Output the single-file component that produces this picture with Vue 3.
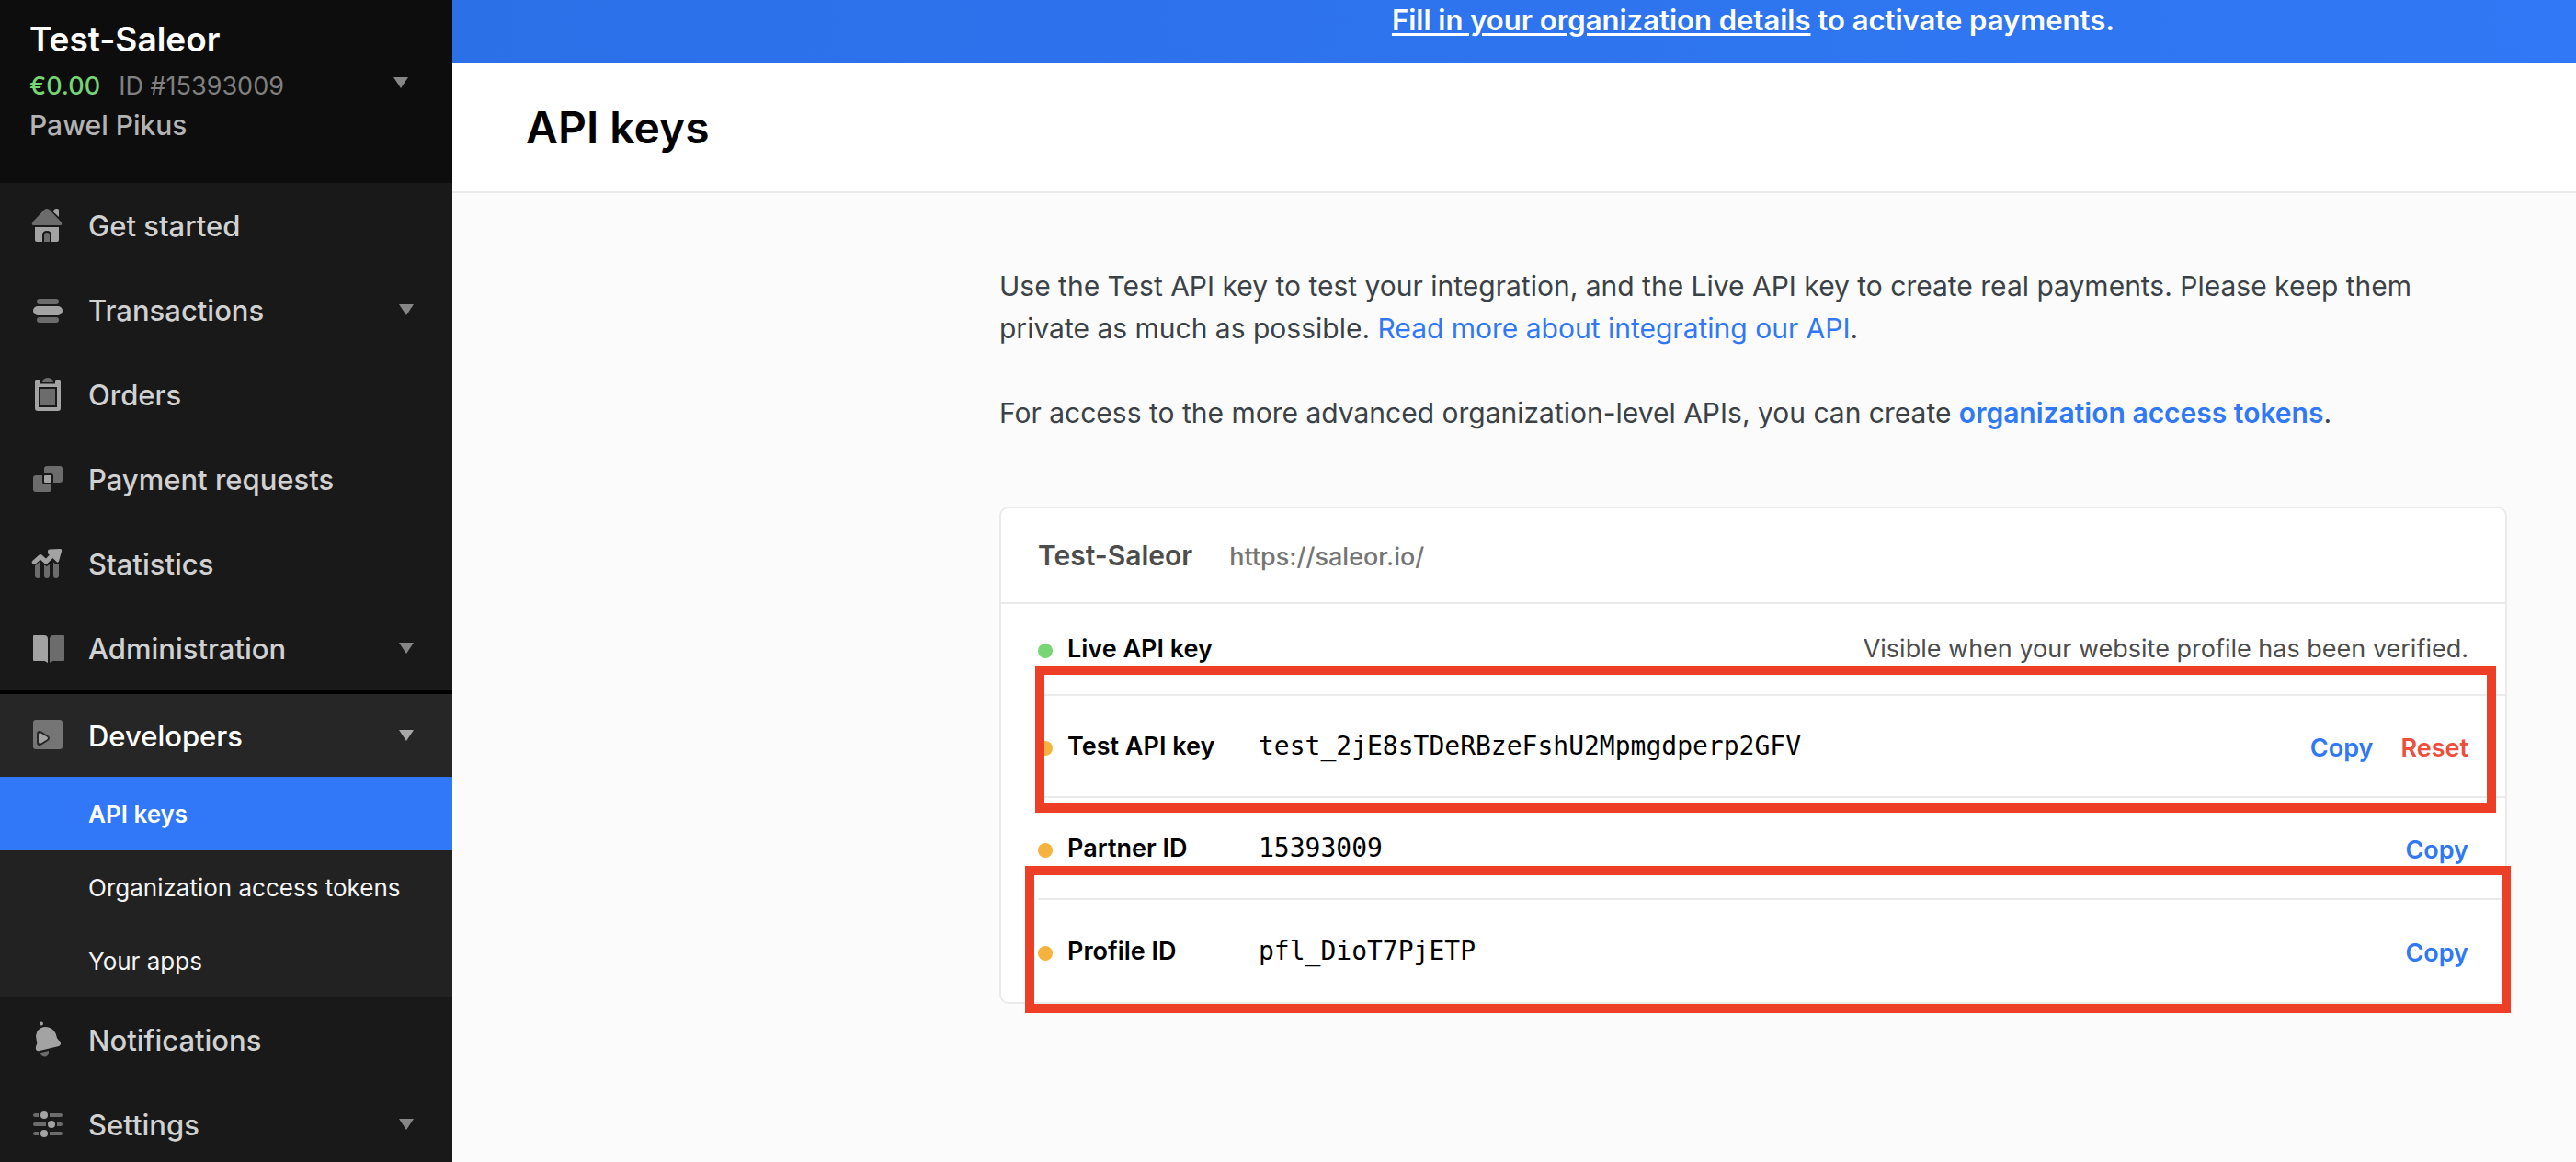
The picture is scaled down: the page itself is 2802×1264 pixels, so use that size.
<script setup>
import { ref } from 'vue'

const developersOpen = ref(true)

const navTop = [
  { id: 'home', label: 'Get started' },
  { id: 'transactions', label: 'Transactions', expandable: true },
  { id: 'orders', label: 'Orders' },
  { id: 'payments', label: 'Payment requests' },
  { id: 'statistics', label: 'Statistics' },
  { id: 'administration', label: 'Administration', expandable: true },
]

const subNav = [
  { label: 'API keys', active: true },
  { label: 'Organization access tokens' },
  { label: 'Your apps' },
]

const keys = [
  { label: 'Live API key', status: 'live', note: 'Visible when your website profile has been verified.' },
  { label: 'Test API key', status: 'test', value: 'test_2jE8sTDeRBzeFshU2Mpmgdperp2GFV', reset: true },
  { label: 'Partner ID', status: 'test', value: '15393009' },
  { label: 'Profile ID', status: 'test', value: 'pfl_DioT7PjETP' },
]

const copy = (text) => navigator.clipboard?.writeText(text)
</script>

<template>
  <div class="app">
    <aside class="sidebar">
      <button class="account" type="button">
        <span class="account-text">
          <span class="account-name">Test-Saleor</span>
          <span class="account-meta"><span class="balance">€0.00</span><span>ID #15393009</span></span>
          <span class="account-user">Pawel Pikus</span>
        </span>
        <span class="caret"></span>
      </button>

      <nav class="nav">
        <a v-for="item in navTop" :key="item.id" class="nav-item" href="#">
          <svg class="icon" viewBox="0 0 36 40" aria-hidden="true">
            <template v-if="item.id === 'home'">
              <path class="lo" d="M14 3.2Q17 .6 20 3.2L32.6 16.4Q34.4 20 31 20H3Q-.4 20 1.4 16.4Z" />
              <path class="hi" d="M24 4.5Q24.6 2 27 2H28.500Q30 2 30 4V11L24 5.500Z" />
              <path class="hi" d="M4 22H30V36Q30 38 28 38H22V31Q22 26 17 26Q12 26 12 31V38H6Q4 38 4 36Z" />
              <path class="lo" d="M14 38V31Q14 28 17 28Q20 28 20 31V38Z" />
            </template>
            <template v-else-if="item.id === 'transactions'">
              <rect class="lo" x="6" y="8" width="24" height="6" rx="3" />
              <rect class="hi" x="2" y="16" width="32" height="10" rx="5" />
              <rect class="lo" x="6" y="28" width="24" height="6" rx="3" />
            </template>
            <template v-else-if="item.id === 'orders'">
              <path class="hi" fill-rule="evenodd" d="M5 4H9Q10 4 10 5.500V8.500H26V5.500Q26 4 27 4H31Q32 4 32 5.500V35Q32 38 29 38H7Q4 38 4 35V5.500Q4 4 5 4ZM8 12V34H28V12Z" />
              <rect class="lo" x="10" y="14" width="16" height="18" />
              <path class="lo" d="M12 6Q12 4 14.500 3Q18 1 21.500 3Q24 4 24 6Z" />
            </template>
            <template v-else-if="item.id === 'payments'">
              <rect class="lo" x="14" y="6" width="20" height="18" rx="3" />
              <rect class="lo" x="2" y="16" width="20" height="18" rx="3" />
              <path class="gap" d="M12 14H21Q24 14 24 17V26H15Q12 26 12 23Z" />
              <rect class="hi" x="14" y="16" width="8" height="8" rx="1" />
            </template>
            <template v-else-if="item.id === 'statistics'">
              <path class="lo" d="M4 22.500 10 17V33Q10 36 7 36Q4 36 4 33ZM14 21.500 17 23 20 21V33Q20 36 17 36Q14 36 14 33ZM24 18.500 27 21H30V33Q30 36 27 36Q24 36 24 33Z" />
              <path class="line" d="M3.200 18.500 10 12.500 16 18 26 8" />
              <path class="hi" d="M18 6Q18 4.500 20 4.500L31.500 4Q33.500 4 33.200 6L30 17.500Q29 19.500 27.500 18L18 9Z" />
            </template>
            <template v-else>
              <path class="hi" d="M3 6H14Q18 6 18 10V36L14.500 34H3Q2 34 2 33V7Q2 6 3 6Z" />
              <path class="lo" d="M35 6H24Q20 6 20 10V36L23.500 34H35Q36 34 36 33V7Q36 6 35 6Z" />
            </template>
          </svg>
          <span>{{ item.label }}</span>
          <span v-if="item.expandable" class="caret"></span>
        </a>

        <div class="group">
          <button class="nav-item open" type="button" :aria-expanded="developersOpen" @click="developersOpen = !developersOpen">
            <svg class="icon" viewBox="0 0 36 40" aria-hidden="true">
              <rect class="lo" x="2" y="3" width="32" height="32" rx="3" />
              <path class="gap" d="M6 18.500Q6 13.500 11 15.500L18 20Q22 23 18 26L11 30.500Q6 32.500 6 27.500Z" />
              <path class="hi" d="M8 19Q8 16.500 10.500 17.500L17 21.500Q19 23 17 24.500L10.500 28.500Q8 29.500 8 27Z" />
            </svg>
            <span>Developers</span>
            <span class="caret"></span>
          </button>
          <template v-if="developersOpen">
            <a v-for="sub in subNav" :key="sub.label" class="sub-item" :class="{ active: sub.active }" href="#">{{ sub.label }}</a>
          </template>
        </div>

        <a class="nav-item" href="#">
          <svg class="icon" viewBox="0 0 36 40" aria-hidden="true">
            <circle class="hi" cx="11" cy="2.500" r="2" />
            <path class="hi" d="M5 16Q6 8 13 6.300Q22 5 26.500 13L28 18Q29 20 31 21.500Q33.500 25 30 27L8 32.300Q4 32 5 27.500L6.300 24Z" />
            <path class="lo" d="M9.500 34.200 19 32Q19.500 37 15.500 38.500Q11.500 39 9.500 34.200Z" />
          </svg>
          <span>Notifications</span>
        </a>
        <a class="nav-item" href="#">
          <svg class="icon" viewBox="0 0 36 40" aria-hidden="true">
            <path class="lo" d="M4 8H8V12H4Q2 12 2 10Q2 8 4 8ZM20 8H32Q34 8 34 10Q34 12 32 12H20ZM4 18H16V22H4Q2 22 2 20Q2 18 4 18ZM28 18H32Q34 18 34 20Q34 22 32 22H28ZM4 28H8V32H4Q2 32 2 30Q2 28 4 28ZM20 28H32Q34 28 34 30Q34 32 32 32H20Z" />
            <circle class="hi" cx="14" cy="10" r="4" />
            <circle class="hi" cx="22" cy="20" r="4" />
            <circle class="hi" cx="14" cy="30" r="4" />
          </svg>
          <span>Settings</span>
          <span class="caret"></span>
        </a>
      </nav>
    </aside>

    <main class="main">
      <div class="banner"><p><a href="#">Fill in your organization details</a> to activate payments.</p></div>
      <header class="page-header"><h1>API keys</h1></header>

      <div class="content">
        <p class="intro">
          Use the Test API key to test your integration, and the Live API key to create real payments. Please keep them
          private as much as possible. <a href="#">Read more about integrating our API</a>.
        </p>
        <p class="intro">
          For access to the more advanced organization-level APIs, you can create
          <a class="strong" href="#">organization access tokens</a>.
        </p>

        <section class="card">
          <div class="card-header">
            <h2>Test-Saleor</h2>
            <span class="url">https://saleor.io/</span>
          </div>
          <table class="keys">
            <tbody>
              <tr v-for="row in keys" :key="row.label" :class="{ compact: row.note }">
                <th scope="row"><span class="label"><span class="dot" :class="row.status"></span>{{ row.label }}</span></th>
                <td v-if="row.note" class="note" colspan="2">{{ row.note }}</td>
                <template v-else>
                  <td><code>{{ row.value }}</code></td>
                  <td class="actions">
                    <button type="button" @click="copy(row.value)">Copy</button>
                    <button v-if="row.reset" class="danger" type="button">Reset</button>
                  </td>
                </template>
              </tr>
            </tbody>
          </table>
          <div class="highlight highlight-test"></div>
          <div class="highlight highlight-profile"></div>
        </section>
      </div>
    </main>
  </div>
</template>

<style>
body {
  margin: 0;
  background: #fbfbfb;
}
</style>

<style scoped>
.app {
  display: flex;
  min-height: 100vh;
  font-family: Inter, "Liberation Sans", sans-serif;
  font-size: 31px;
  color: #000;
}
.app * {
  box-sizing: border-box;
}
button {
  margin: 0;
  padding: 0;
  border: 0;
  background: none;
  font: inherit;
  color: inherit;
  text-align: left;
  cursor: pointer;
}
a {
  color: #2f78f7;
  text-decoration: none;
}
h1, h2, p {
  margin: 0;
}

.sidebar {
  flex: 0 0 492px;
  height: 100vh;
  overflow: hidden;
  background: #191919;
}
.account {
  display: flex;
  align-items: flex-start;
  justify-content: space-between;
  width: 100%;
  height: 199px;
  padding: 19px 48px 0 32px;
  background: #0d0d0d;
}
.account .caret {
  margin-top: 65px;
}
.account-text {
  display: flex;
  flex-direction: column;
}
.account-name {
  font-size: 37px;
  font-weight: 600;
  line-height: 48px;
  color: #fff;
}
.account-meta {
  display: flex;
  gap: 20px;
  font-size: 27px;
  line-height: 54px;
  color: #808080;
}
.balance {
  font-weight: 500;
  color: #77d573;
}
.account-user {
  font-size: 30px;
  font-weight: 500;
  line-height: 30px;
  color: #b3b3b3;
}
.caret {
  width: 0;
  margin-left: auto;
  border: 8px solid transparent;
  border-top: 12px solid #868686;
  border-bottom: 0;
}
.nav-item {
  display: flex;
  align-items: center;
  width: 100%;
  height: 92px;
  padding: 0 42px 0 34px;
  font-weight: 500;
  color: #d1d1d1;
}
.icon {
  flex: none;
  width: 36px;
  height: 40px;
  margin-right: 26px;
  overflow: visible;
}
.hi { fill: #a3a3a3; }
.lo { fill: #6c6c6c; }
.gap { fill: #191919; }
.line {
  fill: none;
  stroke: #a3a3a3;
  stroke-width: 5;
  stroke-linecap: round;
  stroke-linejoin: round;
}
.group {
  border-top: 4px solid #000;
  background: #222;
}
.nav-item.open {
  height: 90px;
  background: #262626;
  color: #fff;
}
.open .lo { fill: #757575; }
.open .gap { fill: #262626; }
.open .caret { border-top-color: #a8a8a8; }
.sub-item {
  display: flex;
  align-items: center;
  height: 80px;
  padding-left: 96px;
  font-size: 26px;
  color: #f4f4f4;
}
.sub-item.active {
  background: #3078f7;
  font-weight: 600;
  color: #fff;
}

.main {
  flex: 1;
  min-width: 0;
}
.banner {
  height: 68px;
  padding: 0 75px 0 595px;
  background: linear-gradient(90deg, #2c70e8, #3078f5);
  font-weight: 600;
  line-height: 43px;
  color: #fff;
  text-align: center;
}
.banner a {
  color: inherit;
  text-decoration: underline;
  text-decoration-thickness: 3px;
  text-underline-offset: 3px;
}
.page-header {
  display: flex;
  align-items: center;
  height: 142px;
  padding: 0 80px;
  border-bottom: 2px solid #ebebeb;
  background: #fff;
}
.page-header h1 {
  font-size: 48px;
  font-weight: 600;
}
.content {
  padding: 78px 75px 160px 595px;
}
.intro {
  margin-bottom: 46px;
  font-size: 30px;
  line-height: 46px;
  color: #3b4247;
}
.strong {
  font-weight: 600;
}
.card {
  position: relative;
  margin-top: 79px;
  border: 2px solid #ebebeb;
  border-radius: 10px;
  background: #fff;
}
.card-header {
  display: flex;
  align-items: baseline;
  gap: 40px;
  height: 104px;
  padding: 31px 40px 0;
  border-bottom: 2px solid #ebebeb;
}
.card-header h2 {
  font-size: 30px;
  font-weight: 600;
  line-height: 40px;
  color: #4d4d4d;
}
.url {
  font-size: 27px;
  font-weight: 500;
  color: #757575;
}
.keys {
  width: calc(100% - 40px);
  margin-left: 40px;
  border-spacing: 0;
  font-size: 27px;
  line-height: 36px;
}
.keys th,
.keys td {
  height: 111px;
  padding: 0;
  border-bottom: 2px solid #ebebeb;
  text-align: left;
}
.keys .compact th,
.keys .compact td {
  height: 100px;
}
.keys tr:last-child th,
.keys tr:last-child td {
  border-bottom: 0;
}
.keys th {
  width: 240px;
  font-weight: 600;
}
.label {
  display: flex;
  align-items: center;
  gap: 16px;
}
.dot {
  width: 16px;
  height: 16px;
  margin-top: 4px;
  border-radius: 50%;
}
.dot.live { background: #77d573; }
.dot.test { background: #f5b23f; }
.keys .note {
  padding-right: 40px;
  color: #4d4d4d;
  text-align: right;
}
code {
  font-family: "DejaVu Sans Mono", monospace;
  font-size: 28px;
}
.keys .actions {
  padding: 4px 40px 0 0;
  text-align: right;
}
.actions button {
  margin-left: 30px;
  font-weight: 600;
  color: #2f78f7;
}
.actions .danger {
  color: #ee4f3b;
}
.highlight {
  position: absolute;
  height: 160px;
  border: 10px solid #ec3f26;
  pointer-events: none;
}
.highlight-test {
  top: 171px;
  right: 10px;
  left: 37px;
}
.highlight-profile {
  top: 389px;
  right: -6px;
  left: 26px;
}
</style>
